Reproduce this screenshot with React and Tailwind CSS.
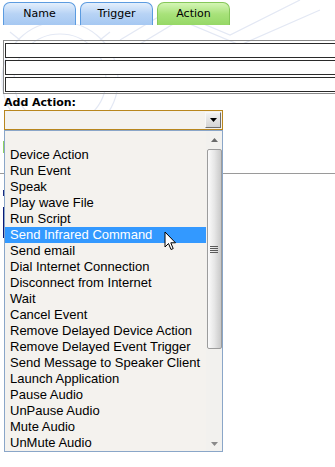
import React from 'react';

const items = [
  '',
  'Device Action',
  'Run Event',
  'Speak',
  'Play wave File',
  'Run Script',
  'Send Infrared Command',
  'Send email',
  'Dial Internet Connection',
  'Disconnect from Internet',
  'Wait',
  'Cancel Event',
  'Remove Delayed Device Action',
  'Remove Delayed Event Trigger',
  'Send Message to Speaker Client',
  'Launch Application',
  'Pause Audio',
  'UnPause Audio',
  'Mute Audio',
  'UnMute Audio',
];

const Tab = ({ label, active }) => (
  <div
    className={
      active
        ? 'w-[73px] h-[23px] rounded-t-[7px] border border-b-0 border-[#86c75a] bg-gradient-to-b from-[#d4f5b4] via-[#a8e27a] to-[#96d866] flex items-center justify-center text-[11px] text-black'
        : 'w-[73px] h-[23px] rounded-t-[7px] border border-b-0 border-[#5b9be0] bg-gradient-to-b from-[#e4effc] via-[#b7d3f5] to-[#a6c8f2] flex items-center justify-center text-[11px] text-black'
    }
    style={{ fontFamily: '"DejaVu Sans", Verdana, sans-serif' }}
  >
    {label}
  </div>
);

const Watermark = () => (
  <svg className="absolute left-0 top-0 pointer-events-none" width="335" height="140" viewBox="0 0 335 140">
    <g fill="none" stroke="#e3e8f4" strokeWidth="1.2">
      <circle cx="60" cy="80" r="58" />
      <circle cx="60" cy="80" r="46" />
      <path d="M20 40 l-10 -8 M100 40 l10 -8 M60 22 l0 -12 M18 80 l-12 0 M102 80 l12 0" />
      <path d="M120 40 L170 10 L230 35 L300 0" />
      <path d="M130 50 L180 20 L240 45 L320 10" />
    </g>
  </svg>
);

const Cursor = () => (
  <svg className="absolute left-[164px] top-[231px]" width="13" height="21" viewBox="0 0 13 21">
    <path
      d="M1 1 L1 16 L4.5 12.5 L7 18.5 L9.2 17.6 L6.8 11.8 L11.5 11.8 Z"
      fill="#ffffff"
      stroke="#000000"
      strokeWidth="1"
      strokeLinejoin="miter"
    />
  </svg>
);

export default function App() {
  return (
    <div className="relative w-[335px] h-[467px] overflow-hidden bg-white">
      <Watermark />

      {/* Tabs */}
      <div className="relative flex gap-[4px] pl-[3px] pt-[2px]">
        <Tab label="Name" />
        <Tab label="Trigger" />
        <Tab label="Action" active />
      </div>

      {/* Field box */}
      <div className="relative mt-[15px] ml-[3px] w-[340px] border border-[#8a8a8a] px-[1px] pt-[2px] pb-[1px] flex flex-col gap-[2px]">
        <div className="h-[15px] border border-[#2a2a2a] bg-white" />
        <div className="h-[15px] border border-[#2a2a2a] bg-white" />
        <div className="h-[15px] border border-[#2a2a2a] bg-white" />
      </div>

      <div
        className="relative ml-[4px] mt-[2px] text-[11px] font-bold leading-[13px] text-black"
        style={{ fontFamily: '"DejaVu Sans", Verdana, sans-serif' }}
      >
        Add Action:
      </div>

      {/* Behind-the-list fragments */}
      <div className="absolute left-[222px] top-[173px] w-[113px] h-[1px] bg-[#9a9a9a]" />
      <div className="absolute left-0 top-[173px] w-[4px] h-[1px] bg-[#9a9a9a]" />
      <div className="absolute left-[3px] top-[141px] w-[2px] h-[12px] bg-[#8fd060]" />
      <div className="absolute left-[3px] top-[190px] w-[2px] h-[6px] bg-[#1c2a80]" />
      <div className="absolute left-[3px] top-[207px] w-[2px] h-[31px] bg-[#0b1a78]" />

      {/* Select */}
      <div className="relative ml-[4px] mt-[1px] w-[219px] h-[20px] border border-[#b8861e] bg-[#f4f2ee] flex items-center justify-end pr-[1px]">
        <div className="w-[16px] h-[16px] border-r border-b border-[#6e6e6e] border-t border-l border-t-[#f8f8f8] border-l-[#f8f8f8] bg-gradient-to-b from-[#f2f2f2] to-[#d4d4d4] flex items-center justify-center">
          <svg width="7" height="4" viewBox="0 0 7 4">
            <path d="M0 0 L7 0 L3.5 4 Z" fill="#000" />
          </svg>
        </div>
      </div>

      {/* Dropdown list */}
      <div
        className="relative ml-[4px] w-[219px] h-[322px] border border-[#8aa6c8] bg-[#f4f2ee] flex text-[13px] leading-[16px] text-black"
        style={{ fontFamily: '"Liberation Sans", Arial, sans-serif' }}
      >
        <div className="flex-1 flex flex-col">
          {items.map((it, i) => (
            <div
              key={i}
              className={
                it === 'Send Infrared Command'
                  ? 'h-[16px] pl-[5px] bg-[#3399ff] text-white whitespace-nowrap'
                  : 'h-[16px] pl-[5px] whitespace-nowrap'
              }
            >
              {it}
            </div>
          ))}
        </div>

        {/* Scrollbar */}
        <div className="w-[16px] flex flex-col items-center bg-[#f2f1ee]">
          <div className="h-[18px] w-full flex items-center justify-center">
            <svg width="7" height="4" viewBox="0 0 7 4">
              <path d="M0 4 L7 4 L3.5 0 Z" fill="#6a6a6a" />
            </svg>
          </div>
          <div className="w-[15px] h-[200px] rounded-[2px] border border-[#9c9c9c] bg-gradient-to-r from-[#fbfbfb] via-[#e6e6e6] to-[#c9c9c9] flex items-center justify-center">
            <div className="flex flex-col gap-[1px]">
              <div className="w-[8px] h-[1px] bg-[#5a5a5a]" />
              <div className="w-[8px] h-[1px] bg-[#5a5a5a]" />
              <div className="w-[8px] h-[1px] bg-[#5a5a5a]" />
              <div className="w-[8px] h-[1px] bg-[#5a5a5a]" />
            </div>
          </div>
          <div className="flex-1" />
          <div className="h-[14px] w-full flex items-center justify-center">
            <svg width="7" height="4" viewBox="0 0 7 4">
              <path d="M0 0 L7 0 L3.5 4 Z" fill="#8a8a8a" />
            </svg>
          </div>
        </div>
      </div>

      <Cursor />
    </div>
  );
}
